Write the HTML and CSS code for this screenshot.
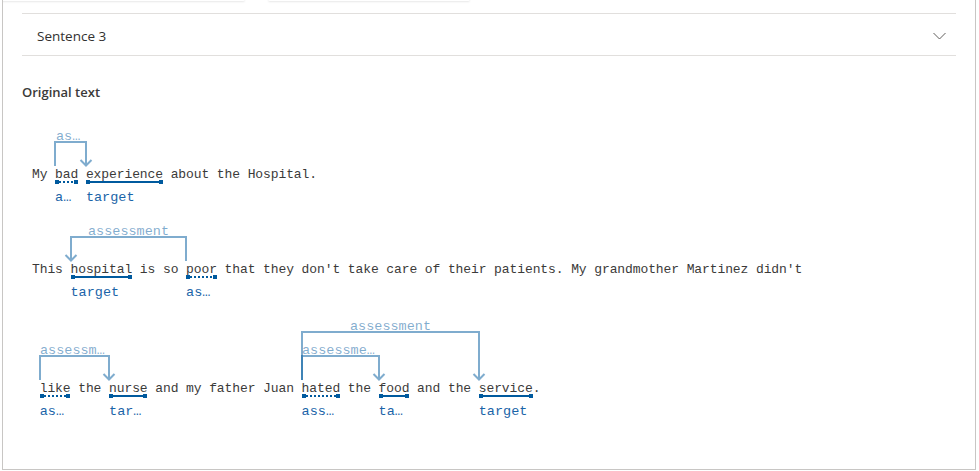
FILE: index.html
```html
<!DOCTYPE html>
<html lang="en">
<head>
<meta charset="utf-8">
<title>Sentence 3</title>
<link rel="stylesheet" href="styles.css">
</head>
<body>
<div class="frame">
  <div class="cards">
    <div class="card card-a"></div>
    <div class="card card-b"></div>
  </div>
  <div class="acc-header">
    <span class="acc-title">Sentence 3</span>
    <svg class="chevron" width="13" height="8" viewBox="0 0 13 8"><polyline points="0.5,1 6.5,7 12.5,1"/></svg>
  </div>
  <div class="section">
    <div class="section-title">Original text</div>
    <div class="line">
      <svg class="arcs" width="934" height="36">
        <text class="arc-label" x="34" y="10">as…</text>
        <path class="arc" d="M33 36 V12 H64 V35 M58.5 30 L64 35.5 L69.5 30"/>
      </svg>
      <div class="words">My <span class="tok dot" title="assessment">bad<i class="ul"></i><span class="lab">a…</span></span> <span class="tok">experience<i class="ul"></i><span class="lab">target</span></span> about the Hospital.</div>
    </div>
    <div class="line">
      <svg class="arcs" width="934" height="36">
        <text class="arc-label mid" x="106.5" y="10">assessment</text>
        <path class="arc" d="M164 36 V12 H49 V35 M43.5 30 L49 35.5 L54.5 30"/>
      </svg>
      <div class="words">This <span class="tok">hospital<i class="ul"></i><span class="lab">target</span></span> is so <span class="tok dot" title="assessment">poor<i class="ul"></i><span class="lab">as…</span></span> that they don't take care of their patients. My grandmother Martinez didn't</div>
    </div>
    <div class="line">
      <svg class="arcs" width="934" height="60">
        <text class="arc-label mid" x="368.5" y="10">assessment</text>
        <path class="arc" d="M280 60 V12 H457 V59 M451.5 54 L457 59.5 L462.5 54"/>
        <text class="arc-label" x="18" y="34">assessm…</text>
        <path class="arc" d="M18 60 V36 H87 V59 M81.5 54 L87 59.5 L92.5 54"/>
        <text class="arc-label" x="280" y="34">assessme…</text>
        <path class="arc" d="M280 60 V36 H357 V59 M351.5 54 L357 59.5 L362.5 54"/>
      </svg>
      <div class="words"> <span class="tok dot" title="assessment">like<i class="ul"></i><span class="lab">as…</span></span> the <span class="tok" title="target">nurse<i class="ul"></i><span class="lab">tar…</span></span> and my father Juan <span class="tok dot" title="assessment">hated<i class="ul"></i><span class="lab">ass…</span></span> the <span class="tok" title="target">food<i class="ul"></i><span class="lab">ta…</span></span> and the <span class="tok">service<i class="ul"></i><span class="lab">target</span></span>.</div>
    </div>
  </div>
</div>
</body>
</html>
```
FILE: styles.css
```css
* { box-sizing: border-box; }
html, body { margin: 0; padding: 0; background: #fff; }
body { font-family: "Open Sans", "Noto Sans", sans-serif; color: #323130; }

.frame {
  margin: 0 3px 0 2px;
  height: 470px;
  border: 1px solid #c8c6c4;
  border-top: none;
  padding: 0 19px;
  overflow: hidden;
}

.cards {
  display: flex;
  gap: 23px;
  height: 13px;
  margin-left: -22px;
}
.card {
  height: 2px;
  margin-top: -1px;
  background: #fff;
  border-radius: 0 0 4px 4px;
  box-shadow: 0 1px 2px rgba(0, 0, 0, 0.10);
}
.card-a { width: 245px; }
.card-b { width: 202px; }

.acc-header {
  display: flex;
  align-items: center;
  justify-content: space-between;
  height: 43px;
  border-top: 1px solid #e1dfdd;
  border-bottom: 1px solid #e1dfdd;
  padding: 2px 10px 0 15px;
}
.acc-title { font-size: 13.5px; color: #323130; }
.chevron { display: block; }
.chevron polyline { fill: none; stroke: #605e5c; stroke-width: 1; }

.section { padding-top: 27px; }
.section-title {
  font-size: 13px;
  font-weight: 600;
  line-height: 18px;
  color: #3b3a39;
  margin-bottom: 29px;
}

.line { padding-bottom: 42px; }
.arcs { display: block; overflow: visible; }
.arc { fill: none; stroke: #005a9e; stroke-opacity: 0.5; stroke-width: 2; }
.arc-label {
  font-family: "Liberation Mono", "DejaVu Sans Mono", monospace;
  font-size: 13.5px;
  fill: #005a9e;
  fill-opacity: 0.5;
}
.arc-label.mid { text-anchor: middle; }

.words {
  padding-left: 10px;
  white-space: pre;
  font-family: "Liberation Mono", "DejaVu Sans Mono", monospace;
  font-size: 13px;
  letter-spacing: -0.1px;
  line-height: 17px;
  color: #3b3a39;
}
.tok { position: relative; display: inline-block; }
.ul {
  position: absolute;
  left: 0;
  right: 0.1px;
  top: 15px;
  height: 2px;
  background: #005a9e;
}
.ul::before, .ul::after {
  content: "";
  position: absolute;
  top: -1px;
  width: 4px;
  height: 4px;
  background: #005a9e;
}
.ul::before { left: 0; }
.ul::after { right: 0; }
.dot .ul {
  background: repeating-linear-gradient(90deg, #005a9e 0 2px, transparent 2px 4px);
}
.lab {
  position: absolute;
  left: 0;
  top: 24px;
  white-space: nowrap;
  font-size: 13.5px;
  letter-spacing: 0;
  line-height: 16px;
  color: #1a64a8;
}
```
